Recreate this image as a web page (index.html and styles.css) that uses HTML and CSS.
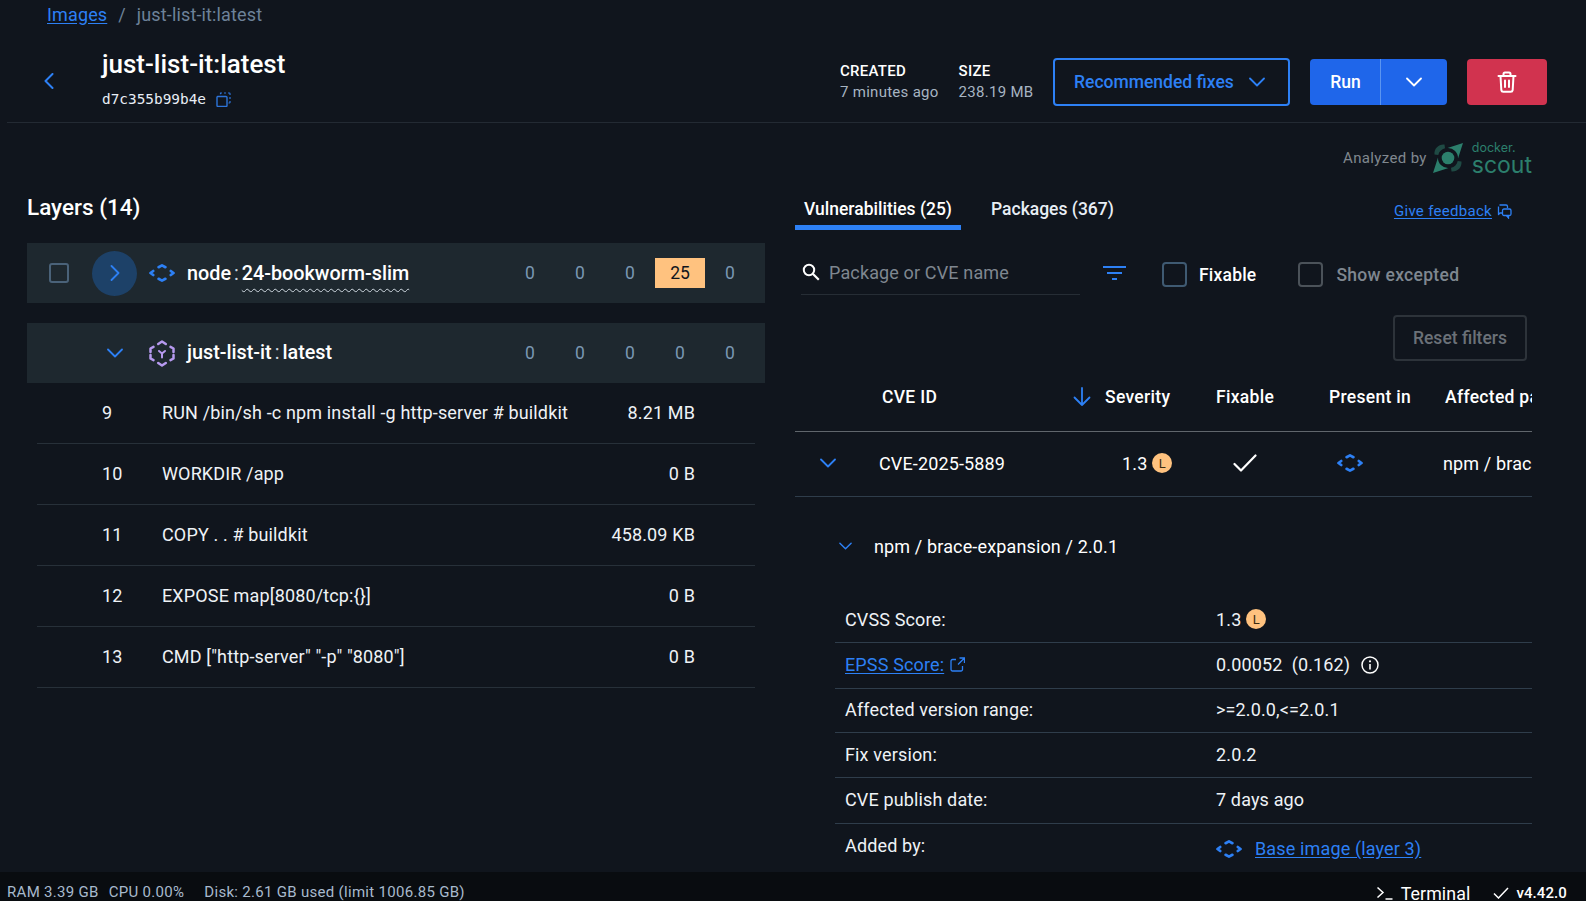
FILE: index.html
```html
<!DOCTYPE html>
<html lang="en">
<head>
<meta charset="utf-8">
<title>just-list-it:latest</title>
<link rel="stylesheet" href="styles.css">
</head>
<body>
<svg class="defs" width="0" height="0" aria-hidden="true">
  <symbol id="base" viewBox="0 0 26 18">
    <path d="M4.200 7 1.500 9l2.700 2M21.800 7l2.700 2-2.700 2M9.600 3.200 13 1.400l3.400 1.800M9.600 14.800l3.400 1.800 3.400-1.800" fill="none" stroke="currentColor" stroke-width="2.700" stroke-linecap="round" stroke-linejoin="round"/>
  </symbol>
  <symbol id="chev-down" viewBox="0 0 16 10">
    <path d="M1 1.500 8 8.500l7-7" fill="none" stroke="currentColor" stroke-width="1.800" stroke-linecap="round" stroke-linejoin="round"/>
  </symbol>
</svg>
<div class="app">
  <main class="content">
    <nav class="crumbs"><a class="link" href="#">Images</a><span class="sep">/</span><span>just-list-it:latest</span></nav>
    <header class="head">
      <svg class="back" viewBox="0 0 10 16"><path d="M8.500 1 1.500 8l7 7" fill="none" stroke="currentColor" stroke-width="2" stroke-linecap="round" stroke-linejoin="round"/></svg>
      <div class="title">
        <h1>just-list-it:latest</h1>
        <div class="hash"><span>d7c355b99b4e</span>
          <svg class="copy" viewBox="0 0 15 15"><path d="M1.500 4.500h8.500a1 1 0 0 1 1 1v8a1 1 0 0 1-1 1h-8a1 1 0 0 1-1-1v-8a1 1 0 0 1 .5-1z" fill="none" stroke="currentColor" stroke-width="1.400"/><path d="M4.500 2.200V1h1.500M8 1h2M12 1h1.400a1 1 0 0 1 .6.600V3M14 5v2M14 9v1.500a1 1 0 0 1-.6.500H12.500" fill="none" stroke="currentColor" stroke-width="1.200"/></svg>
        </div>
      </div>
      <dl class="meta"><dt>CREATED</dt><dd>7 minutes ago</dd></dl>
      <dl class="meta"><dt>SIZE</dt><dd>238.19 MB</dd></dl>
      <button class="fixes">Recommended fixes<svg class="ic-chev" viewBox="0 0 16 10"><use href="#chev-down"/></svg></button>
      <div class="run"><button class="run-main">Run</button><button class="run-more"><svg class="ic-chev" viewBox="0 0 16 10"><use href="#chev-down"/></svg></button></div>
      <button class="del" aria-label="Delete"><svg viewBox="0 0 20 22"><path d="M1.500 5h17M6.500 5V3a1.500 1.500 0 0 1 1.500-1.500h4A1.500 1.500 0 0 1 13.500 3v2M3.500 5l.8 14a2 2 0 0 0 2 1.700h7.400a2 2 0 0 0 2-1.700l.8-14M8 9.500v6.500M12 9.500v6.500" fill="none" stroke="currentColor" stroke-width="2" stroke-linecap="round" stroke-linejoin="round"/></svg></button>
    </header>
    <div class="panes">
      <section class="left">
        <h2>Layers (14)</h2>
        <div class="group">
          <span class="box"></span>
          <span class="round"><svg viewBox="0 0 10 16"><path d="M1.500 1 8.500 8l-7 7" fill="none" stroke="currentColor" stroke-width="1.800" stroke-linecap="round" stroke-linejoin="round"/></svg></span>
          <svg class="ic-base"><use href="#base"/></svg>
          <span class="gname">node<i>:</i><u>24-bookworm-slim</u></span>
          <div class="counts"><span>0</span><span>0</span><span>0</span><span class="hit">25</span><span>0</span></div>
        </div>
        <div class="group own">
          <svg class="ic-chev gchev" viewBox="0 0 16 10"><use href="#chev-down"/></svg>
          <svg class="ic-own" viewBox="0 0 26 27"><path d="M9.200 4 13 1.500 16.800 4M4.500 6.800 1.500 8.500V12M1.500 15v3.500l3 1.700M21.500 6.800l3 1.700V12M24.500 15v3.500l-3 1.700M9.200 23l3.800 2.500 3.800-2.500" fill="none" stroke="currentColor" stroke-width="2.500" stroke-linecap="round" stroke-linejoin="round"/><path d="M10 11l3 2.500 3-2.500M13 13.500V17.500" fill="none" stroke="currentColor" stroke-width="2" stroke-linecap="round" stroke-linejoin="round"/></svg>
          <span class="gname">just-list-it<i>:</i>latest</span>
          <div class="counts"><span>0</span><span>0</span><span>0</span><span>0</span><span>0</span></div>
        </div>
        <ul class="layers">
          <li><span class="num">9</span><span class="cmd">RUN /bin/sh -c npm install -g http-server # buildkit</span><span class="sz">8.21 MB</span></li>
          <li><span class="num">10</span><span class="cmd">WORKDIR /app</span><span class="sz">0 B</span></li>
          <li><span class="num">11</span><span class="cmd">COPY . . # buildkit</span><span class="sz">458.09 KB</span></li>
          <li><span class="num">12</span><span class="cmd">EXPOSE map[8080/tcp:{}]</span><span class="sz">0 B</span></li>
          <li><span class="num">13</span><span class="cmd">CMD ["http-server" "-p" "8080"]</span><span class="sz">0 B</span></li>
        </ul>
      </section>
      <section class="right">
        <div class="analyzed"><span>Analyzed by</span>
          <svg class="scout-logo" viewBox="0 0 30 30"><path d="M30 0 14.500 5A10 10 0 0 1 25 15.500z" fill="#2c7f6c"/><path d="M0 30 15.500 25A10 10 0 0 1 5 14.500z" fill="#2c7f6c"/><path d="M1.500 11.500C1 5.500 5.500 1 11.500 1.500L12 5.200C8.500 6 6 8.500 5.300 12z" fill="#1f4a44"/><path d="M28.500 18.500C29 24.500 24.500 29 18.500 28.500L18 24.800C21.500 24 24 21.500 24.700 18z" fill="#1f4a44"/><circle cx="15" cy="15" r="6.300" fill="#2c7f6c"/></svg>
          <div class="scout-word"><span class="dk">docker.</span><span class="sc">scout</span></div>
        </div>
        <div class="tabs">
          <span class="tab active">Vulnerabilities (25)</span>
          <span class="tab">Packages (367)</span>
          <a class="feedback link" href="#">Give feedback</a>
          <svg class="fb-ic" viewBox="0 0 15 15"><path d="M2.500 1h6.500a1.500 1.500 0 0 1 1.500 1.500V4M5.500 9H3l-1.500 1.500V2.500" fill="none" stroke="currentColor" stroke-width="1.300" stroke-linejoin="round"/><rect x="5.500" y="5" width="8.500" height="6.500" rx="1.500" fill="none" stroke="currentColor" stroke-width="1.300"/><path d="M11.500 11.500v2.500l-2-2.500" fill="none" stroke="currentColor" stroke-width="1.300"/></svg>
        </div>
        <div class="filters">
          <div class="search">
            <svg viewBox="0 0 18 18"><circle cx="7" cy="7" r="5.200" fill="none" stroke="currentColor" stroke-width="2"/><path d="m11 11 5.800 5.800" stroke="currentColor" stroke-width="2.200"/></svg>
            <span>Package or CVE name</span>
          </div>
          <svg class="funnel" viewBox="0 0 23 14"><path d="M0 1h23M4 7h15M9 13h5" stroke="currentColor" stroke-width="2.200"/></svg>
          <span class="check"></span><span class="chk-label">Fixable</span>
          <span class="check off"></span><span class="chk-label dim">Show excepted</span>
        </div>
        <div class="reset-row"><button class="reset">Reset filters</button></div>
        <div class="table">
          <div class="thead">
            <span class="c-cve">CVE ID</span>
            <span class="c-sev"><svg viewBox="0 0 18 20"><path d="M9 1v17M1.500 10.500 9 18l7.500-7.500" fill="none" stroke="currentColor" stroke-width="1.800" stroke-linecap="round" stroke-linejoin="round"/></svg>Severity</span>
            <span class="c-fix">Fixable</span>
            <span class="c-in">Present in</span>
            <span class="c-pkg">Affected package</span>
          </div>
          <div class="trow">
            <svg class="ic-chev rchev" viewBox="0 0 16 10"><use href="#chev-down"/></svg>
            <span class="v-cve">CVE-2025-5889</span>
            <span class="v-sev">1.3<b class="sevb">L</b></span>
            <span class="v-fix"><svg viewBox="0 0 24 18"><path d="M1.500 10 8 16.500 22.500 1.500" fill="none" stroke="currentColor" stroke-width="2.200" stroke-linecap="round" stroke-linejoin="round"/></svg></span>
            <span class="v-in"><svg class="ic-base"><use href="#base"/></svg></span>
            <span class="v-pkg">npm / brace-expansion</span>
          </div>
          <div class="pkg"><svg class="ic-chev pchev" viewBox="0 0 16 10"><use href="#chev-down"/></svg>npm / brace-expansion / 2.0.1</div>
          <div class="details">
            <div class="d-row"><span>CVSS Score:</span><span class="d-val">1.3<b class="sevb">L</b></span></div>
            <div class="d-row d-tall"><span class="epss"><a class="link" href="#">EPSS Score:</a><svg class="ext" viewBox="0 0 15 15"><path d="M6 2.500H2.500a1.500 1.500 0 0 0-1.500 1.500v8.500A1.500 1.500 0 0 0 2.500 14H11a1.500 1.500 0 0 0 1.500-1.500V9M8 7.500 14 1.500M9.500 1H14.500V6" fill="none" stroke="currentColor" stroke-width="1.300"/></svg></span><span class="d-val">0.00052&nbsp; (0.162)<svg class="info" viewBox="0 0 18 18"><circle cx="9" cy="9" r="8" fill="none" stroke="currentColor" stroke-width="1.500"/><path d="M9 8v5.500" stroke="currentColor" stroke-width="1.600"/><circle cx="9" cy="5.300" r="1.100" fill="currentColor"/></svg></span></div>
            <div class="d-row"><span>Affected version range:</span><span class="d-val">&gt;=2.0.0,&lt;=2.0.1</span></div>
            <div class="d-row"><span>Fix version:</span><span class="d-val">2.0.2</span></div>
            <div class="d-row d-tall"><span>CVE publish date:</span><span class="d-val">7 days ago</span></div>
            <div class="d-row d-last"><span>Added by:</span><span class="d-val d-add"><svg class="ic-base"><use href="#base"/></svg><a class="link" href="#">Base image (layer 3)</a></span></div>
          </div>
        </div>
      </section>
    </div>
  </main>
  <footer class="status">
    <span class="st">RAM 3.39 GB</span><span class="st st-cpu">CPU 0.00%</span><span class="st st-disk">Disk: 2.61 GB used (limit 1006.85 GB)</span>
    <span class="term"><svg viewBox="0 0 17 14"><path d="M1.500 1.500 7 6.500l-5.500 5M9.500 13H16.500" fill="none" stroke="currentColor" stroke-width="1.500"/></svg>Terminal</span>
    <span class="ver"><svg viewBox="0 0 16 12"><path d="M1 6.500 5.500 11 15 1" fill="none" stroke="currentColor" stroke-width="1.500"/></svg>v4.42.0</span>
  </footer>
</div>
</body>
</html>
```

FILE: styles.css
```css
* { box-sizing: border-box; }
html, body { margin: 0; padding: 0; }
body {
  background: #10151d;
  color: #fff;
  font-family: Roboto, "Liberation Sans", sans-serif;
  font-size: 18px;
  letter-spacing: .14px;
  overflow: hidden;
}
.defs { display: block; width: 0; height: 0; }
.app { height: 901px; display: flex; flex-direction: column; overflow: hidden; }
.content { height: 872px; flex: none; overflow: hidden; }
.link { color: #2d80f5; text-decoration: underline; text-underline-offset: 2px; }
button { font-family: inherit; border: 0; padding: 0; letter-spacing: 0; }

.crumbs { height: 30px; padding-left: 47px; padding-bottom: 2px; display: flex; align-items: center; color: #6d8299; }
.sep { margin: 0 11px; }

.head { height: 93px; margin-left: 7px; border-bottom: 1px solid #232a33; display: flex; align-items: flex-start; padding-left: 37px; }
.back { width: 10px; height: 16px; color: #2d80f5; margin-top: 43px; flex: none; }
.title { width: 738px; margin-left: 48px; padding-top: 14px; flex: none; }
.title h1 { margin: 0; font-size: 26px; line-height: 40px; font-weight: 500; height: 38px; letter-spacing: 0; }
.hash { display: flex; align-items: center; font-family: "DejaVu Sans Mono", monospace; font-size: 14.400px; height: 24px; margin-top: 5px; color: #e8eef5; letter-spacing: 0; }
.copy { width: 15px; height: 15px; color: #2d74d9; margin-left: 10px; }
.meta { margin: 0 20px 0 0; padding-top: 31px; font-size: 15px; letter-spacing: .28px; }
.meta dt { font-weight: 500; line-height: 20px; }
.meta dd { margin: 0; color: #a7b4c2; line-height: 22px; }
.fixes { width: 237px; height: 48px; margin-top: 28px; padding-right: 5px; background: transparent; border: 2px solid #2d80f5; border-radius: 4px; color: #2d80f5; font-size: 17.500px; font-weight: 500; display: flex; align-items: center; justify-content: center; gap: 15px; }
.ic-chev { width: 16px; height: 10px; color: #2d80f5; flex: none; }
.run { width: 137px; height: 46px; margin: 29px 0 0 20px; display: flex; border-radius: 4px; overflow: hidden; background: #1f66ea; }
.run-main { width: 71px; border-right: 1px solid #5b95f0; background: transparent; color: #fff; font-size: 17.500px; font-weight: 500; }
.run-more { flex: 1; background: transparent; display: flex; align-items: center; justify-content: center; }
.run-more .ic-chev { color: #fff; }
.del { width: 80px; height: 46px; margin: 29px 0 0 20px; background: #d1334f; border-radius: 4px; color: #fff; display: flex; align-items: center; justify-content: center; }
.del svg { width: 20px; height: 22px; }

.panes { display: grid; grid-template-columns: 738px 737px; column-gap: 30px; padding-left: 27px; }

.left h2 { margin: 0; padding-top: 68px; font-size: 22.500px; line-height: 33px; height: 120px; font-weight: 500; letter-spacing: 0; }
.group { height: 60px; background: #1e282f; display: flex; align-items: center; padding-left: 22px; margin-bottom: 20px; }
.box { width: 20px; height: 20px; border: 2px solid #4a6279; border-radius: 3px; flex: none; }
.round { width: 45px; height: 45px; border-radius: 50%; background: #1d4168; margin-left: 23px; display: flex; align-items: center; justify-content: center; color: #2d80f5; flex: none; }
.round svg { width: 10px; height: 16px; }
.ic-base { width: 26px; height: 18px; color: #2d80f5; flex: none; }
.group > .ic-base { margin-left: 12px; }
.gname { margin-left: 12px; font-weight: 500; font-size: 19.800px; white-space: nowrap; letter-spacing: 0; }
.gname i { font-style: normal; margin: 0 3px; color: #cfd8e0; font-weight: 400; }
.gname u { text-decoration: underline wavy #cfd8e0 1px; text-underline-offset: 8px; }
.counts { margin-left: auto; margin-right: 10px; display: flex; color: #7a97b3; font-size: 17.500px; letter-spacing: 0; }
.counts span { width: 50px; height: 30px; display: flex; align-items: center; justify-content: center; }
.counts .hit { background: #ffc27f; color: #10151d; }
.own { margin-bottom: 0; padding-left: 80px; }
.own .gname { margin-top: -2px; }
.ic-own { width: 26px; height: 27px; color: #b79af0; margin-left: 26px; flex: none; }

.layers { list-style: none; margin: 0 10px; padding: 0; }
.layers li { height: 61px; padding-bottom: 2px; display: flex; align-items: center; border-bottom: 1px solid #273039; color: #eef2f6; }
.num { box-sizing: content-box; width: 60px; padding-left: 65px; }
.cmd { flex: 1; }
.sz { padding-right: 60px; }

.right { overflow: hidden; }
.analyzed { margin-top: 20px; height: 30px; display: flex; justify-content: flex-end; align-items: center; color: #80888f; font-size: 15px; letter-spacing: .35px; }
.scout-logo { width: 30px; height: 30px; margin-left: 6px; flex: none; }
.scout-word { display: flex; flex-direction: column; margin-left: 9px; color: #2c7f6c; font-family: Inter, sans-serif; letter-spacing: 0; }
.dk { font-size: 12.500px; line-height: 13px; }
.sc { font-size: 23px; line-height: 22px; }
.tabs { height: 57px; display: flex; align-items: flex-start; }
.tab { height: 57px; padding: 24px 9px 0; line-height: 24px; font-weight: 500; font-size: 17.500px; color: #e8eef5; margin-left: 1px; letter-spacing: 0; }
.tab.active { border-bottom: 5px solid #2d80f5; color: #fff; margin-right: 20px; margin-left: 0; }
.feedback { margin-left: auto; margin-top: 26px; font-size: 15px; line-height: 24px; letter-spacing: .3px; }
.fb-ic { width: 15px; height: 15px; color: #2d80f5; margin: 31px 20px 0 5px; flex: none; }
.filters { height: 85px; display: flex; align-items: center; }
.search { width: 279px; height: 44px; margin-left: 6px; border-bottom: 1px solid #262d35; display: flex; align-items: center; color: #7f8790; }
.search svg { width: 18px; height: 18px; color: #fff; margin-left: 1px; margin-right: 9px; }
.funnel { width: 23px; height: 14px; color: #2d80f5; margin-left: 23px; }
.check { width: 25px; height: 25px; border: 2px solid #3f5a72; border-radius: 4px; margin-left: 36px; margin-top: 4px; }
.check.off { border-color: #4b5259; margin-left: 42px; }
.chk-label { margin-left: 12px; margin-top: 4px; font-weight: 500; font-size: 17.500px; letter-spacing: .2px; }
.chk-label.dim { color: #7f8790; margin-left: 13px; letter-spacing: .3px; }
.reset-row { height: 44px; display: flex; justify-content: flex-end; padding-right: 5px; }
.reset { width: 134px; height: 46px; background: transparent; border: 2px solid #2d333a; border-radius: 4px; color: #6b7178; font-size: 17.500px; font-weight: 500; }

.table { width: 737px; }
.thead { height: 73px; padding-top: 4px; border-bottom: 1px solid #60666c; display: flex; align-items: center; font-weight: 500; font-size: 17.500px; letter-spacing: .3px; white-space: nowrap; overflow: hidden; }
.c-cve { margin-left: 87px; width: 191px; flex: none; }
.c-sev { width: 143px; flex: none; display: flex; align-items: center; gap: 14px; }
.c-sev svg { width: 18px; height: 20px; color: #2d80f5; }
.c-fix { width: 113px; flex: none; }
.c-in { width: 116px; flex: none; }
.trow { height: 65px; padding-bottom: 2px; border-bottom: 1px solid #2f3d4b; display: flex; align-items: center; white-space: nowrap; overflow: hidden; }
.rchev { margin-left: 25px; }
.v-cve { margin-left: 43px; width: 194px; flex: none; }
.v-sev { width: 116px; flex: none; padding-left: 49px; display: flex; align-items: center; }
.sevb { width: 20px; height: 20px; border-radius: 50%; background: #ffc27f; color: #3a2a10; font-size: 13px; font-weight: 400; display: inline-flex; align-items: center; justify-content: center; margin-left: 5px; }
.v-fix { width: 148px; flex: none; display: flex; padding-left: 44px; }
.v-fix svg { width: 24px; height: 18px; }
.v-in { width: 106px; flex: none; display: flex; }
.pkg { height: 101px; display: flex; align-items: center; padding-left: 44px; padding-bottom: 3px; }
.pchev { width: 13px; height: 8px; margin-right: 22px; }
.details { margin-left: 40px; }
.d-row { display: grid; grid-template-columns: 371px 1fr; height: 45px; padding-bottom: 2px; align-items: center; border-bottom: 1px solid #2f3d4b; padding-left: 10px; color: #eef2f6; }
.d-tall { height: 46px; }
.d-val { display: flex; align-items: center; }
.d-row:nth-child(3) { height: 44px; }
.d-last { border-bottom: 0; align-items: start; padding-top: 11px; }
.epss { display: flex; align-items: center; gap: 6px; }
.ext { width: 15px; height: 15px; color: #2d80f5; }
.info { width: 18px; height: 18px; margin-left: 11px; color: #fff; }
.d-add { gap: 13px; padding-top: 3px; }

.status { flex: 1; background: #090c10; display: flex; padding: 11px 19px 0 7px; font-size: 15px; color: #a8bacd; white-space: nowrap; overflow: hidden; letter-spacing: .3px; }
.st { line-height: 18px; }
.st-cpu { margin-left: 10px; }
.st-disk { margin-left: 20px; }
.term { margin-left: auto; color: #fff; font-size: 17.800px; display: flex; align-items: flex-start; line-height: 22px; letter-spacing: .1px; }
.term svg { width: 17px; height: 14px; margin: 3px 8px 0 0; }
.ver { margin-left: 23px; color: #fff; font-weight: 500; display: flex; align-items: flex-start; line-height: 20px; letter-spacing: .1px; }
.ver svg { width: 16px; height: 12px; margin: 4px 7px 0 0; }
```
